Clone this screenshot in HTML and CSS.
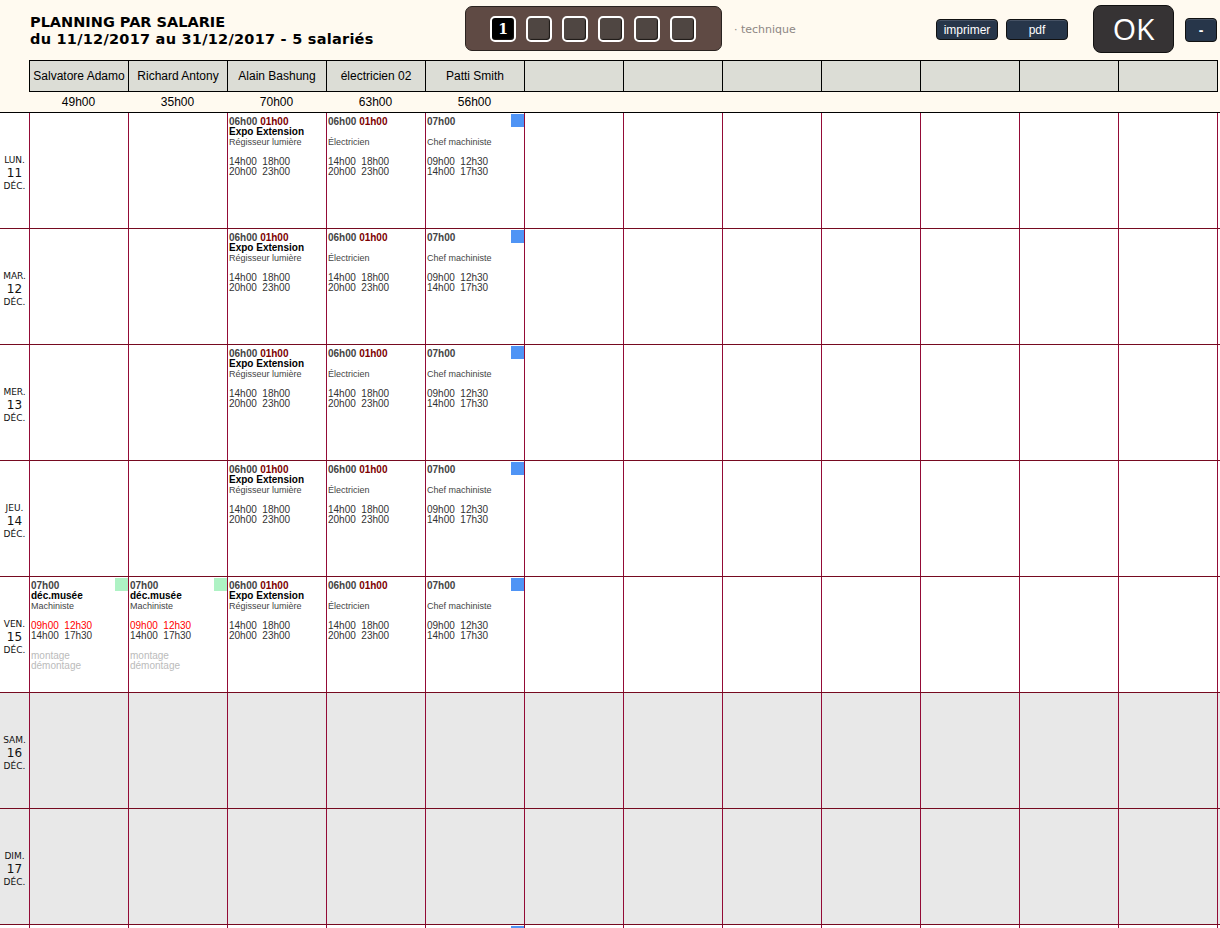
FILE: index.html
```html
<!DOCTYPE html>
<html lang="fr">
<head>
<meta charset="utf-8">
<title>Planning par salarié</title>
<link rel="stylesheet" href="styles.css">
</head>
<body>
<header class="head">
  <div class="toolbar">
    <h1 class="title">PLANNING PAR SALARIE<br><span class="range">du 11/12/2017 au 31/12/2017 - 5 salariés</span></h1>
    <div class="pager">
      <span class="page active">1</span><span class="page"></span><span class="page"></span><span class="page"></span><span class="page"></span><span class="page"></span>
    </div>
    <div class="tag">· technique</div>
    <div class="actions">
      <button class="btn">imprimer</button>
      <button class="btn">pdf</button>
    </div>
    <button class="ok">OK</button>
    <button class="minus">-</button>
  </div>
  <div class="names">
    <div class="name">Salvatore Adamo</div><div class="name">Richard Antony</div><div class="name">Alain Bashung</div><div class="name">électricien 02</div><div class="name">Patti Smith</div><div class="name"></div><div class="name"></div><div class="name"></div><div class="name"></div><div class="name"></div><div class="name"></div><div class="name"></div>
  </div>
  <div class="totals">
    <div class="total">49h00</div><div class="total">35h00</div><div class="total">70h00</div><div class="total">63h00</div><div class="total">56h00</div>
  </div>
</header>
<main class="grid">

  <div class="row">
    <div class="day"><span>LUN.</span><b>11</b><span>DÉC.</span></div>
    <div class="cell"></div><div class="cell"></div>
    <div class="cell"><div class="hrs">06h00 <em>01h00</em></div><div class="job">Expo Extension</div><div class="role">Régisseur lumière</div><div class="times">14h00&nbsp; 18h00<br>20h00&nbsp; 23h00</div></div>
    <div class="cell"><div class="hrs">06h00 <em>01h00</em></div><div class="job">&nbsp;</div><div class="role">Électricien</div><div class="times">14h00&nbsp; 18h00<br>20h00&nbsp; 23h00</div></div>
    <div class="cell"><i class="flag blue"></i><div class="hrs">07h00</div><div class="job">&nbsp;</div><div class="role">Chef machiniste</div><div class="times">09h00&nbsp; 12h30<br>14h00&nbsp; 17h30</div></div>
    <div class="cell"></div><div class="cell"></div><div class="cell"></div><div class="cell"></div><div class="cell"></div><div class="cell"></div><div class="cell"></div>
  </div>

  <div class="row">
    <div class="day"><span>MAR.</span><b>12</b><span>DÉC.</span></div>
    <div class="cell"></div><div class="cell"></div>
    <div class="cell"><div class="hrs">06h00 <em>01h00</em></div><div class="job">Expo Extension</div><div class="role">Régisseur lumière</div><div class="times">14h00&nbsp; 18h00<br>20h00&nbsp; 23h00</div></div>
    <div class="cell"><div class="hrs">06h00 <em>01h00</em></div><div class="job">&nbsp;</div><div class="role">Électricien</div><div class="times">14h00&nbsp; 18h00<br>20h00&nbsp; 23h00</div></div>
    <div class="cell"><i class="flag blue"></i><div class="hrs">07h00</div><div class="job">&nbsp;</div><div class="role">Chef machiniste</div><div class="times">09h00&nbsp; 12h30<br>14h00&nbsp; 17h30</div></div>
    <div class="cell"></div><div class="cell"></div><div class="cell"></div><div class="cell"></div><div class="cell"></div><div class="cell"></div><div class="cell"></div>
  </div>

  <div class="row">
    <div class="day"><span>MER.</span><b>13</b><span>DÉC.</span></div>
    <div class="cell"></div><div class="cell"></div>
    <div class="cell"><div class="hrs">06h00 <em>01h00</em></div><div class="job">Expo Extension</div><div class="role">Régisseur lumière</div><div class="times">14h00&nbsp; 18h00<br>20h00&nbsp; 23h00</div></div>
    <div class="cell"><div class="hrs">06h00 <em>01h00</em></div><div class="job">&nbsp;</div><div class="role">Électricien</div><div class="times">14h00&nbsp; 18h00<br>20h00&nbsp; 23h00</div></div>
    <div class="cell"><i class="flag blue"></i><div class="hrs">07h00</div><div class="job">&nbsp;</div><div class="role">Chef machiniste</div><div class="times">09h00&nbsp; 12h30<br>14h00&nbsp; 17h30</div></div>
    <div class="cell"></div><div class="cell"></div><div class="cell"></div><div class="cell"></div><div class="cell"></div><div class="cell"></div><div class="cell"></div>
  </div>

  <div class="row">
    <div class="day"><span>JEU.</span><b>14</b><span>DÉC.</span></div>
    <div class="cell"></div><div class="cell"></div>
    <div class="cell"><div class="hrs">06h00 <em>01h00</em></div><div class="job">Expo Extension</div><div class="role">Régisseur lumière</div><div class="times">14h00&nbsp; 18h00<br>20h00&nbsp; 23h00</div></div>
    <div class="cell"><div class="hrs">06h00 <em>01h00</em></div><div class="job">&nbsp;</div><div class="role">Électricien</div><div class="times">14h00&nbsp; 18h00<br>20h00&nbsp; 23h00</div></div>
    <div class="cell"><i class="flag blue"></i><div class="hrs">07h00</div><div class="job">&nbsp;</div><div class="role">Chef machiniste</div><div class="times">09h00&nbsp; 12h30<br>14h00&nbsp; 17h30</div></div>
    <div class="cell"></div><div class="cell"></div><div class="cell"></div><div class="cell"></div><div class="cell"></div><div class="cell"></div><div class="cell"></div>
  </div>

  <div class="row">
    <div class="day"><span>VEN.</span><b>15</b><span>DÉC.</span></div>
    <div class="cell"><i class="flag green"></i><div class="hrs">07h00</div><div class="job">déc.musée</div><div class="role">Machiniste</div><div class="times"><span class="late">09h00&nbsp; 12h30</span><br>14h00&nbsp; 17h30</div><div class="notes">montage<br>démontage</div></div>
    <div class="cell"><i class="flag green"></i><div class="hrs">07h00</div><div class="job">déc.musée</div><div class="role">Machiniste</div><div class="times"><span class="late">09h00&nbsp; 12h30</span><br>14h00&nbsp; 17h30</div><div class="notes">montage<br>démontage</div></div>
    <div class="cell"><div class="hrs">06h00 <em>01h00</em></div><div class="job">Expo Extension</div><div class="role">Régisseur lumière</div><div class="times">14h00&nbsp; 18h00<br>20h00&nbsp; 23h00</div></div>
    <div class="cell"><div class="hrs">06h00 <em>01h00</em></div><div class="job">&nbsp;</div><div class="role">Électricien</div><div class="times">14h00&nbsp; 18h00<br>20h00&nbsp; 23h00</div></div>
    <div class="cell"><i class="flag blue"></i><div class="hrs">07h00</div><div class="job">&nbsp;</div><div class="role">Chef machiniste</div><div class="times">09h00&nbsp; 12h30<br>14h00&nbsp; 17h30</div></div>
    <div class="cell"></div><div class="cell"></div><div class="cell"></div><div class="cell"></div><div class="cell"></div><div class="cell"></div><div class="cell"></div>
  </div>

  <div class="row weekend">
    <div class="day"><span>SAM.</span><b>16</b><span>DÉC.</span></div>
    <div class="cell"></div><div class="cell"></div><div class="cell"></div><div class="cell"></div><div class="cell"></div><div class="cell"></div><div class="cell"></div><div class="cell"></div><div class="cell"></div><div class="cell"></div><div class="cell"></div><div class="cell"></div>
  </div>

  <div class="row weekend">
    <div class="day"><span>DIM.</span><b>17</b><span>DÉC.</span></div>
    <div class="cell"></div><div class="cell"></div><div class="cell"></div><div class="cell"></div><div class="cell"></div><div class="cell"></div><div class="cell"></div><div class="cell"></div><div class="cell"></div><div class="cell"></div><div class="cell"></div><div class="cell"></div>
  </div>

  <div class="row tail">
    <div class="day"></div>
    <div class="cell"></div><div class="cell"></div><div class="cell"></div><div class="cell"></div>
    <div class="cell"><i class="flag blue"></i></div>
    <div class="cell"></div><div class="cell"></div><div class="cell"></div><div class="cell"></div><div class="cell"></div><div class="cell"></div><div class="cell"></div>
  </div>

</main>
</body>
</html>
```

FILE: styles.css
```css
* { box-sizing: border-box; }
html, body { margin: 0; padding: 0; height: 928px; overflow: hidden; background: #fff; }
body { font-family: "Liberation Sans", Arial, sans-serif; color: #000; }

.head { height: 113px; background: #fffaf0; border-bottom: 1px solid #000; }
.toolbar { display: flex; align-items: flex-start; height: 60px; padding: 5px 0 0 30px; }
.title { width: 435px; margin: 9px 0 0; font: bold 14.5px/17px "DejaVu Sans", Verdana, sans-serif; color: #000; }
.range { letter-spacing: .25px; }
.pager { width: 257px; height: 45px; margin-top: 1px; display: flex; align-items: center; justify-content: center; gap: 10px; padding-right: 1px; background: #5f4a44; border: 1px solid #2a2320; border-radius: 7px; }
.page { width: 26px; height: 26px; display: flex; align-items: center; justify-content: center; background: #4f4642; border: 2px solid #fff; border-radius: 5px; box-shadow: inset -1px -1px 1px #1c1816; color: #fff; font: bold 14px/1 "DejaVu Serif", serif; }
.page.active { background: #000; }
.tag { width: 202px; margin: 18px 0 0 12px; font: 11px/14px "DejaVu Sans", sans-serif; color: #8d8784; }
.actions { display: flex; gap: 8px; margin-top: 14px; margin-right: 25px; }
.btn { width: 62px; height: 21px; padding: 0; background: #27364a; border: 1px solid #111; border-radius: 4px; box-shadow: inset 0 1px 0 rgba(255,255,255,.15); color: #fff; font: 12px/1 "Liberation Sans", sans-serif; }
.ok { width: 81px; height: 48px; padding: 0; background: #363334; border: 1px solid #111; border-radius: 8px; color: #fff; font: 30px/1 "Open Sans", "DejaVu Sans", sans-serif; }
.minus { width: 32px; height: 24px; margin: 13px 0 0 11px; padding: 0; background: #27364a; border: 1px solid #111; border-radius: 4px; box-shadow: inset 0 1px 0 rgba(255,255,255,.15); color: #fff; font: bold 14px/1 "Liberation Sans", sans-serif; }

.names { display: flex; margin-left: 29px; width: 1189px; height: 32px; border: 1px solid #000; border-right: 0; background: #dcddd6; }
.name { width: 99px; display: flex; align-items: center; justify-content: center; border-right: 1px solid #000; font-size: 12px; color: #000; white-space: nowrap; }
.totals { display: flex; margin-left: 29px; height: 20px; }
.total { width: 99px; text-align: center; font-size: 12px; line-height: 20px; color: #000; }

.row { display: flex; height: 116px; border-bottom: 1px solid #760a20; }
.tail { height: 3px; overflow: hidden; border-bottom: 0; }
.weekend { background: #e8e8e8; }
.day { width: 29px; flex: none; display: flex; flex-direction: column; align-items: center; justify-content: center; padding-top: 4px; font: 9px/12px "DejaVu Sans", sans-serif; color: #111; }
.day b { font: 400 12px/14px "DejaVu Sans", sans-serif; }
.cell { width: 99px; flex: none; position: relative; border-left: 1px solid #930b36; padding: 3px 0 0 1px; font-size: 10px; line-height: 10px; color: #333; }
.cell:last-child { width: 100px; border-right: 1px solid #930b36; }
.hrs { padding-top: 1px; font-weight: bold; color: #444; }
.hrs em { font-style: normal; color: #7d0000; }
.job { font-weight: bold; color: #000; }
.role { font-size: 9px; color: #444; }
.times { margin-top: 10px; color: #333; }
.late { color: #f00; }
.notes { margin-top: 10px; color: #bbb; }
.flag { position: absolute; top: 1px; right: 0; width: 13px; height: 13px; }
.blue { background: #4f94f5; }
.green { background: #aef2c4; }
```
